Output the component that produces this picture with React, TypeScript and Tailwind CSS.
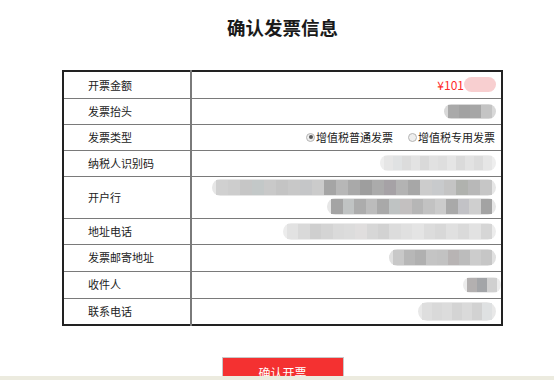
import React from "react";

const FONT = { fontFamily: '"Noto Sans CJK SC", "Noto Sans", sans-serif' };

function Blob({
  colors,
  cell = 9,
  h = 14,
  halo = "#e8e8e8",
}: {
  colors: string[];
  cell?: number;
  h?: number;
  halo?: string;
}) {
  return (
    <div
      className="inline-flex items-center rounded-full px-[4px] blur-[0.6px]"
      style={{ background: halo, height: h + 2 }}
    >
      {colors.map((c, i) => (
        <div key={i} style={{ background: c, width: cell, height: h }} />
      ))}
    </div>
  );
}

function Radio({ checked }: { checked?: boolean }) {
  return (
    <span className="inline-flex h-[9px] w-[9px] items-center justify-center rounded-full border border-[#b5b5b5] bg-[#eeeeee] mr-[1px]">
      {checked && <span className="h-[4px] w-[4px] rounded-full bg-[#555]" />}
    </span>
  );
}

const light = ["#e6e6e6", "#e0e2e3", "#dcdcdc", "#e3e3e3", "#d9d9d9", "#e1e1e1", "#dedede", "#e5e5e5", "#dadada", "#e2e2e2", "#dcdcdc", "#e6e6e6", "#dfdfdf"];

export default function App() {
  const rows: { label: string; h: string; content: React.ReactNode }[] = [
    {
      label: "开票金额",
      h: "h-[27px]",
      content: (
        <div className="flex items-center justify-end">
          <span className="text-[12px] text-[#ff2a2a]">¥101</span>
          <div className="h-[15px] w-[32px] rounded-full bg-[#f8cfd0] blur-[0.5px]" />
        </div>
      ),
    },
    {
      label: "发票抬头",
      h: "h-[26px]",
      content: (
        <div className="flex justify-end">
          <Blob colors={["#a9a9a9", "#a2a2a2", "#a6a6a6", "#c4c4c4"]} cell={11} h={13} halo="#d8d8d8" />
        </div>
      ),
    },
    {
      label: "发票类型",
      h: "h-[26px]",
      content: (
        <div className="flex items-center justify-end text-[11px] text-[#222] pr-[1px]">
          <Radio checked />
          <span>增值税普通发票</span>
          <span className="ml-[15px]" />
          <Radio />
          <span>增值税专用发票</span>
        </div>
      ),
    },
    {
      label: "纳税人识别码",
      h: "h-[26px]",
      content: (
        <div className="flex justify-end">
          <Blob colors={light.slice(0, 12)} cell={9} h={14} halo="#eeeeee" />
        </div>
      ),
    },
    {
      label: "开户行",
      h: "h-[42px]",
      content: (
        <div className="flex flex-col items-end gap-[2px]">
          <Blob
            colors={["#d0d0d0", "#cdcdcd", "#c6c6c6", "#c3c8c8", "#c9c9c9", "#c4c4c4", "#c8c8c8", "#c5c6c8", "#cbcbcb", "#a5a5a5", "#b7b7b7", "#a9a9a9", "#9e9e9e", "#ababab", "#a6a2a6", "#b3b3b3", "#a7a7a7", "#cccccc", "#c8cacc", "#c4c4c4", "#b0b2ae", "#b8b8b8", "#c6c6c6"]}
            cell={12}
            h={15}
            halo="#e6e6e6"
          />
          <Blob
            colors={["#a4a4a4", "#c0c3c3", "#acacac", "#bcbcbc", "#a9a9a9", "#bfc3c3", "#c3c0c0", "#b6b6b6", "#c2c2c2", "#cbcbcb", "#a9a9a9", "#c2c2c6", "#cfcfcf", "#a3a3a3"]}
            cell={11.5}
            h={15}
            halo="#e6e6e6"
          />
        </div>
      ),
    },
    {
      label: "地址电话",
      h: "h-[26px]",
      content: (
        <div className="flex justify-end">
          <Blob
            colors={["#e2e2e2", "#d9d9d9", "#cfcfcf", "#d4d4d4", "#dadada", "#dcdcdc", "#e0dede", "#d7d7d7", "#d2d2d2", "#dcdcdc", "#e0e0e0", "#e4e4e4", "#dcdcdc", "#d8d8d8", "#e0e0e0", "#dadada", "#e2e2e2", "#d6d6d6"]}
            cell={11.4}
            h={15}
            halo="#ececec"
          />
        </div>
      ),
    },
    {
      label: "发票邮寄地址",
      h: "h-[27px]",
      content: (
        <div className="flex justify-end">
          <Blob colors={["#c8c8c8", "#b7b7b7", "#b0b0b0", "#c4c4c4", "#c2c2c2", "#b8b4b4", "#bcbcbc", "#cccccc", "#c6c6c6"]} cell={11} h={15} halo="#e0e0e0" />
        </div>
      ),
    },
    {
      label: "收件人",
      h: "h-[27px]",
      content: (
        <div className="flex justify-end -mr-[5px]">
          <Blob colors={["#b3b0b0", "#a3a5a8", "#d0d0d0"]} cell={10} h={14} halo="#ececec" />
        </div>
      ),
    },
    {
      label: "联系电话",
      h: "h-[27px]",
      content: (
        <div className="flex justify-end">
          <Blob colors={["#dedede", "#d9d9d9", "#dcdcdc", "#d4d4d4", "#dadada", "#d2d2d2", "#dfe1e2"]} cell={10} h={17} halo="#e8e8e8" />
        </div>
      ),
    },
  ];

  return (
    <div className="relative h-[380px] w-[554px] overflow-hidden bg-white text-[#222]" style={FONT}>
      <div className="ml-[62px] flex w-[441px] flex-col items-center">
        <h1 className="mt-[14px] text-[18.5px] font-bold leading-[26px] text-[#1a1a1a]">确认发票信息</h1>
        <table className="mt-[30px] w-[441px] border-collapse border-2 border-[#222]">
          <tbody>
            {rows.map((r) => (
              <tr key={r.label} className={r.h}>
                <td className="w-[128px] border border-[#7a7a7a] pl-[24px] text-[11px] text-[#222] align-middle">
                  {r.label}
                </td>
                <td className="border-y border-l-2 border-[#7a7a7a] pr-[5px] align-middle">{r.content}</td>
              </tr>
            ))}
          </tbody>
        </table>
        <button className="mt-[31px] h-[32px] w-[122px] border border-[#c8c8c8] bg-[#f43131] text-[12px] text-white">
          确认开票
        </button>
      </div>
      <div className="absolute bottom-0 left-0 h-[4px] w-full bg-[#ecebdf]" />
    </div>
  );
}
